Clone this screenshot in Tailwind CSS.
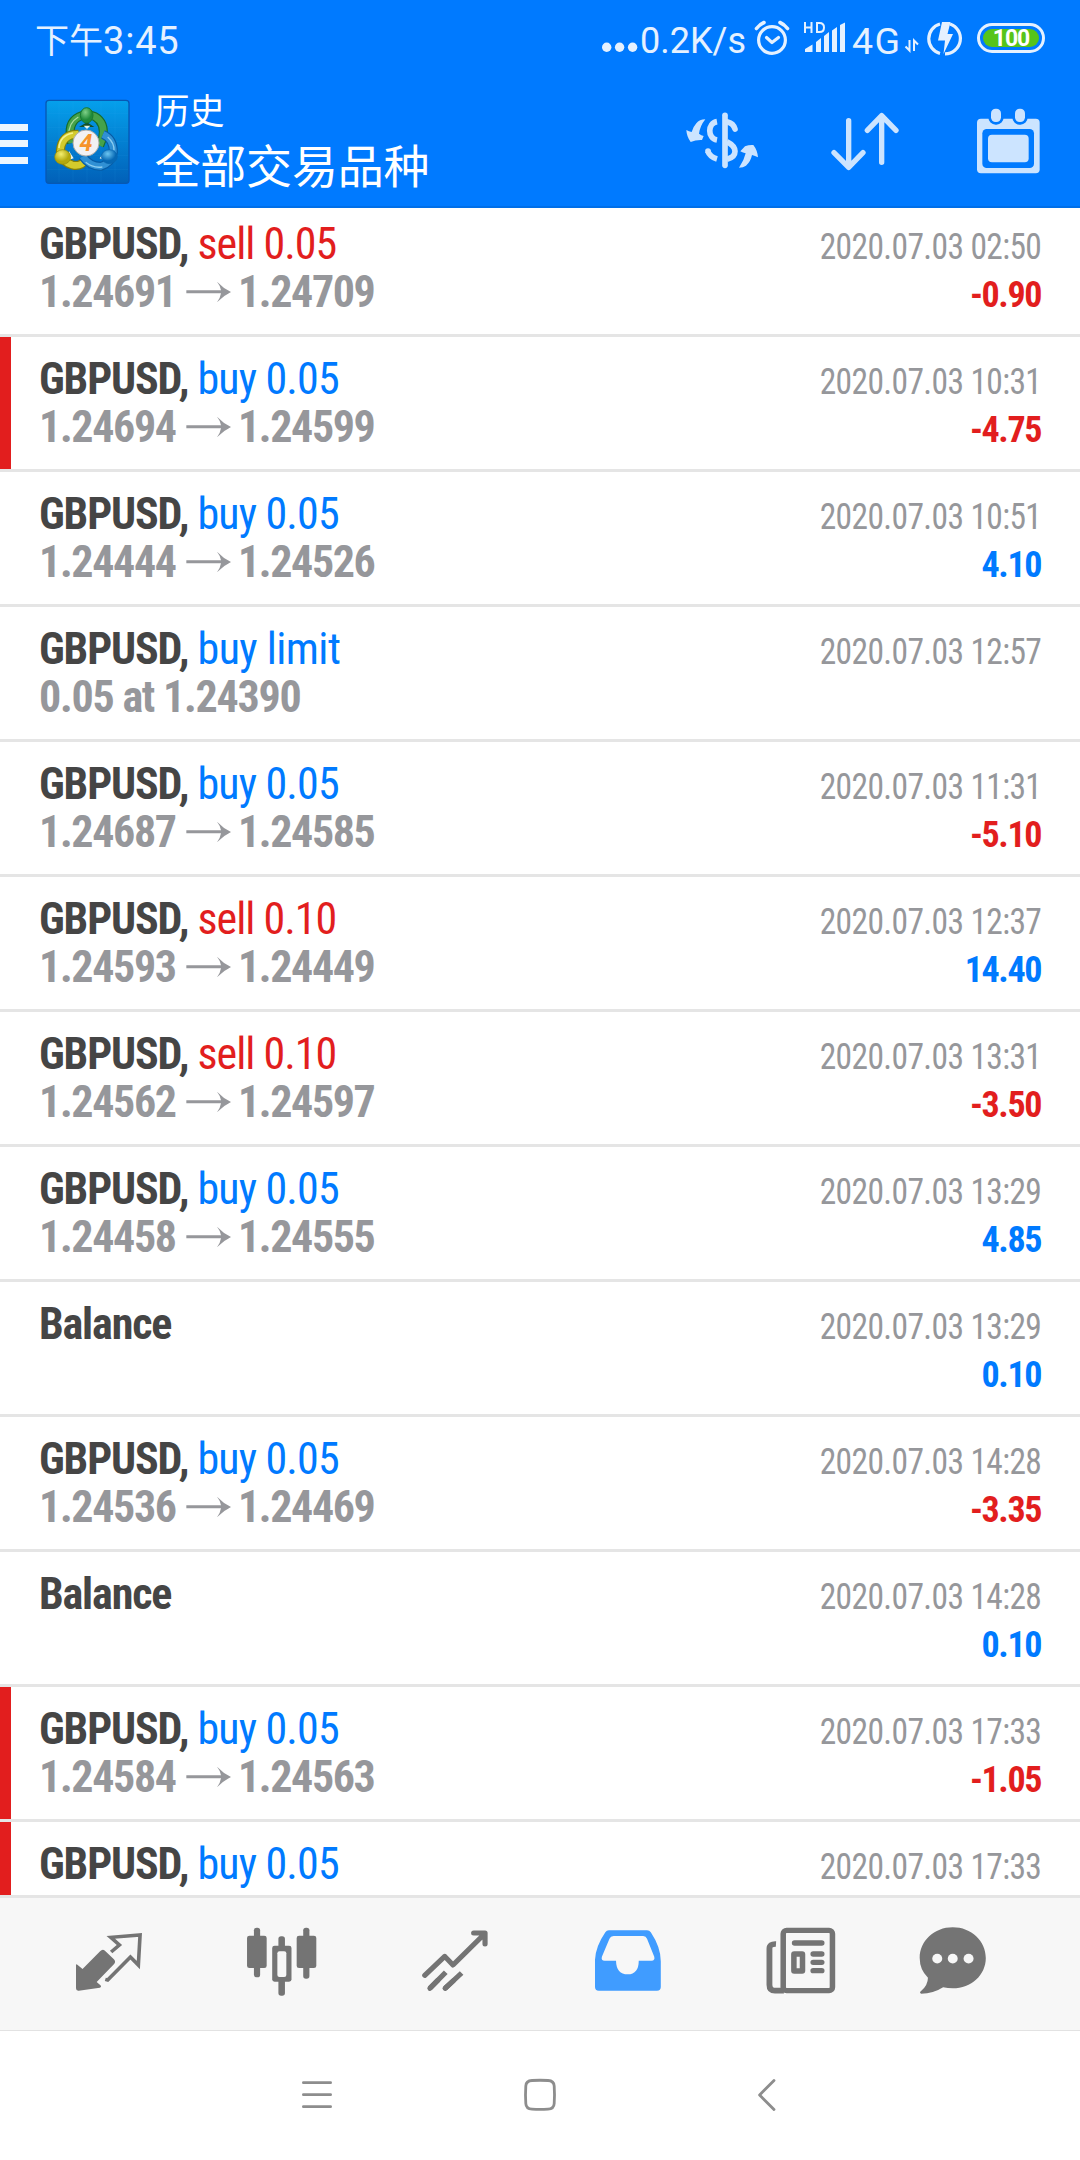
<!DOCTYPE html>
<html lang="zh-CN">
<head>
<meta charset="utf-8">
<title>历史</title>
<script src="https://cdn.jsdelivr.net/npm/@tailwindcss/browser@4"></script>
</head>
<body class="bg-white">
<div class="w-[1080px] h-[2160px] overflow-hidden flex flex-col bg-white font-['Roboto','Noto_Sans_CJK_SC',sans-serif]">

  <header class="relative z-10 h-[208px] shrink-0 bg-[#007aff] border-b-2 border-[#006fe8]">
    <!-- status bar -->
    <div class="h-[80px] flex items-center text-[#e5f1ff] whitespace-nowrap">
      <div class="ml-[35px] mt-[2px] w-[564px] flex items-center leading-[40px]"><span class="text-[34px]">下午</span><span class="text-[38px] tracking-[0.8px]">3:45</span></div>
      <svg class="w-[41px] h-[60px] shrink-0" viewBox="599 10 41 60" fill="currentColor"><circle cx="606.7" cy="47.3" r="4.7"/><circle cx="619.6" cy="47.3" r="4.7"/><circle cx="632.6" cy="47.3" r="4.7"/></svg>
      <span class="w-[112px] mt-px text-[36px] leading-[40px]">0.2K/s</span>
      <svg class="w-[48px] h-[60px] shrink-0" viewBox="752 10 48 60" fill="none" stroke="currentColor" stroke-width="3.2" stroke-linecap="round" stroke-linejoin="round"><circle cx="772" cy="40" r="13.4"/><path d="M766.5 37.5l5.5 5 6.500-5"/><path d="M756.500 28.500q3-4 7.500-6M787.500 28.500q-3-4-7.500-6" stroke-width="3.600"/></svg>
      <svg class="w-[52px] h-[60px] shrink-0" viewBox="800 10 52 60" fill="currentColor"><path d="M805 52v-3l7.500-4.500V52zM816 52V42l5-4v14zM824 52V36l5-4v20zM832 52V30.500l5-3.500v25zM840 52V25l5-2.500V52z"/><path d="M805 22v11M811.500 22v11M805 27.500h6.500M817 23v9h2.500q4.500 0 4.500-4.500t-4.500-4.500z" fill="none" stroke="currentColor" stroke-width="2"/></svg>
      <span class="w-[52px] mt-px text-[37.500px] leading-[40px] tracking-[1.5px]">4G</span>
      <svg class="w-[22px] h-[60px] shrink-0" viewBox="904 10 22 60" fill="none" stroke="currentColor" stroke-width="2"><path d="M909.500 40v10.500l-4-4M914 51V40.500l4 4"/></svg>
      <svg class="w-[48px] h-[60px] shrink-0" viewBox="925 10 48 60"><path d="M939 53.500A15.300 15.300 0 0 1 939 24M949 24A15.300 15.300 0 0 1 944 53.800" fill="none" stroke="currentColor" stroke-width="3.200"/><path d="M941 22h8.500l-3 12h5.500l-9.500 20 1.500-13.500h-7z" fill="currentColor"/></svg>
      <div class="ml-[3px] mt-[-4px] w-[68px] h-[30px] rounded-full border-[3px] border-[#e5f1ff] p-[3px]"><div class="h-full rounded-full bg-[#56c41a] text-white text-[23px] leading-[19px] font-bold text-center tracking-[-1px]">100</div></div>
    </div>
    <!-- app bar -->
    <div class="h-[126px] flex items-start text-[#cce4ff]">
      <div class="mt-[43.5px] w-[28px] flex flex-col gap-[9.3px]"><i class="h-[7.3px] bg-[#edf6ff]"></i><i class="h-[7.3px] bg-[#edf6ff]"></i><i class="h-[7.3px] bg-[#edf6ff]"></i></div>
      <svg class="ml-[16px] mt-[18px] w-[87px] h-[92px]" viewBox="45 55 261 276">
        <defs>
          <linearGradient id="bg" x1="0" y1="0" x2="0" y2="1"><stop offset="0" stop-color="#05a0ec"/><stop offset="1" stop-color="#0160b8"/></linearGradient>
          <radialGradient id="gr" cx=".4" cy=".3"><stop offset="0" stop-color="#7ed088"/><stop offset="1" stop-color="#1f8a3a"/></radialGradient>
          <radialGradient id="ye" cx=".4" cy=".3"><stop offset="0" stop-color="#f4ee70"/><stop offset="1" stop-color="#b3a80c"/></radialGradient>
          <radialGradient id="bl" cx=".4" cy=".3"><stop offset="0" stop-color="#6cc6f2"/><stop offset="1" stop-color="#0668b4"/></radialGradient>
        </defs>
        <rect x="51" y="62" width="249" height="249" rx="9" fill="url(#bg)" stroke="#0758b4" stroke-width="4"/>
        <path d="M90 65v243M132 65v243M174 65v243M216 65v243M258 65v243M54 102h243M54 144h243M54 186h243M54 228h243M54 270h243" stroke="#3fb4f2" stroke-opacity=".14" stroke-width="2"/>
        <path d="M128 190Q112 130 150 111Q173 100 198 111Q230 130 221 175L212 198" fill="none" stroke="#176c2c" stroke-width="27"/>
        <path d="M128 190Q112 130 150 111Q173 100 198 111Q230 130 221 175L212 198" fill="none" stroke="#45a24a" stroke-width="20"/>
        <path d="M120 168Q117 130 148 112" fill="none" stroke="#a8dca0" stroke-width="4"/>
        <path d="M148 164Q97 162 94 215Q98 246 130 256Q156 262 170 240" fill="none" stroke="#857f08" stroke-width="27"/>
        <path d="M148 164Q97 162 94 215Q98 246 130 256Q156 262 170 240" fill="none" stroke="#d3cb2c" stroke-width="20"/>
        <path d="M90 205Q92 168 132 160" fill="none" stroke="#f5f190" stroke-width="5"/>
        <path d="M222 164Q254 178 253 218Q246 251 215 260Q182 260 161 230" fill="none" stroke="#075ba5" stroke-width="27"/>
        <path d="M222 164Q254 178 253 218Q246 251 215 260Q182 260 161 230" fill="none" stroke="#3090d4" stroke-width="20"/>
        <path d="M236 172Q256 190 255 212M170 248Q192 266 220 262" fill="none" stroke="#8ccdf0" stroke-width="4"/>
        <path d="M150 142h46l-22-14z" fill="#124f27"/><path d="M164 138h20l-10 10z" fill="#e8f4e8"/>
        <path d="M120 214l14 22-14 4zM228 214l-16 22 14 6z" fill="#f4f6ea"/>
        <ellipse cx="173" cy="107" rx="19" ry="23" fill="url(#gr)" stroke="#187a33" stroke-width="3"/>
        <ellipse cx="101" cy="232" rx="24" ry="22" fill="url(#ye)" stroke="#948b0a" stroke-width="2"/>
        <ellipse cx="241" cy="231" rx="24" ry="21" fill="url(#bl)" stroke="#0864ad" stroke-width="2"/>
        <circle cx="171" cy="190" r="39" fill="#f2f1f3" stroke="#ababa8" stroke-width="3"/>
        <text x="171" y="214" text-anchor="middle" font-family="Roboto" font-style="italic" font-weight="700" font-size="70" fill="#f6932c">4</text>
      </svg>
      <div class="ml-[23.500px] w-[530.500px] text-white whitespace-nowrap">
        <div class="mt-[10px] text-[35px] leading-[46px]">历史</div>
        <div class="mt-px text-[46px] leading-[60px] tracking-[-0.2px]">全部交易品种</div>
      </div>
      <svg class="mt-[30px] w-[75px] h-[60px]" viewBox="75 60 225 180" fill="none" stroke="currentColor" stroke-width="17" stroke-linecap="butt">
        <path d="M195 76V226" stroke-linecap="round"/>
        <path d="M171 95C142 100 142 145 171 150" stroke-width="17"/>
        <path d="M203 96Q220 100 225 117M144 184" stroke-linecap="round"/>
        <path d="M143 183Q150 201 171 207"/><circle cx="144" cy="183" r="8.500" fill="currentColor" stroke="none"/>
        <path d="M201 155Q225 167 225 184Q225 202 201 208" stroke-width="17"/>
        <path d="M136 88Q118 88 109 100Q99 111 95 126Q87 125 79 120Q80 140 92 156Q108 149 126 150L131 138Q124 136 117 131Q120 108 136 88ZM237 233Q252 212 257 190Q249 188 241 184L255 169Q267 164 280 165Q292 180 294 202Q285 198 276 195Q272 215 258 227Q250 233 237 233Z" fill="currentColor" stroke="none"/>
      </svg>
      <svg class="ml-[70px] mt-[30px] w-[70px] h-[64px]" viewBox="510 60 210 192" fill="none" stroke="currentColor" stroke-width="16" stroke-linecap="round" stroke-linejoin="round"><path d="M566 92V232M522 188L566 232L609 188M665 217V77M622 121L665 77L708 121"/></svg>
      <svg class="ml-[75px] mt-[26px] w-[66px] h-[72px]" viewBox="945 48 198 216" fill="currentColor">
        <rect x="951" y="86" width="188" height="164" rx="12"/>
        <rect x="967" y="117" width="155" height="117" rx="13" fill="#007aff"/><rect x="984" y="134" width="122" height="83" rx="12"/>
        <rect x="993" y="56" width="30" height="40" rx="14" stroke="#007aff" stroke-width="16" paint-order="stroke"/><rect x="1065" y="56" width="30" height="40" rx="14" stroke="#007aff" stroke-width="16" paint-order="stroke"/>
      </svg>
    </div>
  </header>

  <main class="h-[1687px] shrink-0 overflow-hidden"><div id="list" class="-mt-1.5"></div></main>

  <!-- tab bar -->
  <nav class="h-[135px] shrink-0 flex items-start border-t-[3px] border-[#e5e5e5] bg-[#f7f7f7] text-[#747474]">
    <svg preserveAspectRatio="none" class="ml-[76px] mt-[29.300px] w-[66px] h-[69.700px]" viewBox="221 142 191.600 209"><path d="M221 256Q221 252 225 255L240 268L291 215Q298 206 305 213L331 239Q338 246 331 254L281 307L292 317Q296 322 290 324L229 333Q221 334 221 326Z" fill="currentColor"/><path d="M323 217L347 196L322 173L407 166L402 256L379 232L313 301L306 299" fill="none" stroke="currentColor" stroke-width="10.500"/></svg>
    <svg preserveAspectRatio="none" class="ml-[104px] mt-[29.300px] w-[71px] h-[69.700px]" viewBox="714 142 206 209" fill="currentColor"><rect x="737" y="144" width="18" height="149" rx="8"/><rect x="717" y="168" width="57" height="97" rx="7"/><rect x="880" y="144" width="18" height="153" rx="8"/><rect x="861" y="168" width="57" height="97" rx="7"/><rect x="808" y="170" width="19" height="178" rx="8"/><rect x="790" y="198" width="56" height="108" rx="7"/><rect x="805" y="215" width="26" height="77" rx="6" fill="#f7f7f7"/></svg>
    <svg preserveAspectRatio="none" class="ml-[105px] mt-[29.300px] w-[66px] h-[69.700px]" viewBox="1224 142 191.600 209" fill="none" stroke="currentColor" stroke-width="15" stroke-linecap="round" stroke-linejoin="round"><path d="M1232 287L1290 230L1314 256L1406 162M1374 160H1407V193"/><path d="M1247 326L1293 278M1291 326L1339 280" stroke-linecap="butt"/><path d="M1247 326L1270 302M1291 326L1315 303"/></svg>
    <svg preserveAspectRatio="none" class="ml-[107px] mt-[29.300px] w-[66px] h-[69.700px]" viewBox="160 142 191.600 209"><path d="M190 158Q194 152 200 152H311Q318 152 322 158Q351 203 351 245V322Q351 333 340 333H171Q160 333 160 322V240Q162 200 190 158ZM202 177L180 231Q177 243 188 243H221Q222 284 255 284Q287 283 287 243H324Q335 242 332 231L311 177Q308 169 300 169H214Q205 169 202 177Z" fill="#409cff" fill-rule="evenodd"/></svg>
    <svg preserveAspectRatio="none" class="ml-[105px] mt-[29.300px] w-[70px] h-[69.700px]" viewBox="658 142 203.300 209" fill="none" stroke="currentColor" stroke-width="16"><rect x="708" y="152" width="143" height="181" rx="10"/><path d="M687 193Q668 192 668 207V315Q668 333 684 333H710" stroke-width="17"/><path d="M741 190H820M795 223H820M795 248H820M795 273H820" stroke-linecap="round"/><rect x="739" y="223" width="25" height="51" rx="1"/></svg>
    <svg preserveAspectRatio="none" class="ml-[83px] mt-[29.300px] w-[68px] h-[69.700px]" viewBox="1101 142 197.500 209" fill="currentColor"><path d="M1199 143C1253 143 1295 184 1295 235C1295 286 1253 326 1199 326Q1185 326 1171 323Q1143 342 1107 342Q1101 339 1107 334Q1127 316 1127 294Q1103 270 1103 235C1103 184 1145 143 1199 143Z"/><g fill="#f7f7f7"><circle cx="1154" cy="237" r="14.500"/><circle cx="1199" cy="237" r="14.500"/><circle cx="1245" cy="237" r="14.500"/></g></svg>
  </nav>

  <!-- system navigation -->
  <div class="h-[130px] shrink-0 border-t border-[#e2e2e2] flex items-start pt-[46px] text-[#8d8d8d]">
    <svg class="ml-[302px] w-[30px] h-[36px]" viewBox="302 2077 30 36" fill="none" stroke="currentColor" stroke-width="2.800" stroke-linecap="round"><path d="M303.400 2082.700H330.600M303.400 2094.700H330.600M303.400 2106.700H330.600"/></svg>
    <svg class="ml-[191px] w-[36px] h-[36px]" viewBox="523 2084 36 36" fill="none" stroke="currentColor" stroke-width="2.800"><path d="M532 2087.500Q540 2087 548 2087.500Q554 2087.800 554.200 2093Q554.800 2102 554.200 2110.500Q554 2115.800 548 2116.200Q540 2116.700 532 2116.200Q526 2115.800 525.800 2110.500Q525.200 2102 525.800 2093Q526 2087.800 532 2087.500Z"/></svg>
    <svg class="ml-[196px] w-[24px] h-[36px]" viewBox="755 2084 24 36" fill="none" stroke="currentColor" stroke-width="2.800" stroke-linecap="round" stroke-linejoin="round"><path d="M774 2087.500L759.600 2102L774 2116.500"/></svg>
  </div>
</div>
<script>
const rows = [
  ['sell 0.05','1.24691','1.24709','02:50','-0.90'],
  ['buy 0.05','1.24694','1.24599','10:31','-4.75',1],
  ['buy 0.05','1.24444','1.24526','10:51','4.10'],
  ['buy limit','0.05 at 1.24390','','12:57',''],
  ['buy 0.05','1.24687','1.24585','11:31','-5.10'],
  ['sell 0.10','1.24593','1.24449','12:37','14.40'],
  ['sell 0.10','1.24562','1.24597','13:31','-3.50'],
  ['buy 0.05','1.24458','1.24555','13:29','4.85'],
  ['','','','13:29','0.10'],
  ['buy 0.05','1.24536','1.24469','14:28','-3.35'],
  ['','','','14:28','0.10'],
  ['buy 0.05','1.24584','1.24563','17:33','-1.05',1],
  ['buy 0.05','','','17:33','',1],
];
const arrow = '<svg class="w-[45px] h-[22px] shrink-0" viewBox="557 241 135 66" fill="currentColor"><path d="M558 269H662Q660 255 650 243Q669 263 692 274Q669 285 650 305Q660 292 662 278H558Z"/></svg>';
document.getElementById('list').innerHTML = rows.map(([op, a, b, time, profit, mark]) => `
  <div class="h-[135px] border-b-[3px] border-[#e5e5e5] flex font-stretch-condensed whitespace-nowrap">
    <div class="w-[11px] shrink-0 ${mark ? 'bg-[#e21e1e]' : ''}"></div>
    <div class="pl-7 pt-[17px] flex-1">
      <div class="flex text-[44px] leading-[50px]">
        <span class="font-bold text-[#454545] ${op ? 'w-[158.500px]' : ''} tracking-[-1.15px]">${op ? 'GBPUSD,' : 'Balance'}</span>
        <span class="${op.startsWith('sell') ? 'tracking-[-1px] text-[#e21e1e]' : op === 'buy limit' ? 'tracking-[-0.55px] text-[#007aff]' : 'tracking-[-0.85px] text-[#007aff]'}">${op}</span>
      </div>
      <div class="mt-[-2px] flex items-center text-[44px] leading-[50px] font-bold text-[#96979b]">
        <span class="${b ? 'w-[147px] tracking-[-1.35px]' : 'tracking-[-1.25px]'}">${a}</span>${b ? arrow + `<span class="ml-[7px] tracking-[-1.4px]">${b}</span>` : ''}
      </div>
    </div>
    <div class="pt-[20px] pr-[39px] text-right text-[36px] leading-[50px]">
      <div class="text-[#96979b] tracking-[-0.67px] scale-x-93 origin-right">2020.07.03 ${time}</div>
      <div class="mt-[-2px] font-bold tracking-[-1.4px] ${profit[0] === '-' ? 'text-[#e21e1e]' : 'text-[#007aff]'}">${profit}</div>
    </div>
  </div>`).join('');
</script>
</body>
</html>
